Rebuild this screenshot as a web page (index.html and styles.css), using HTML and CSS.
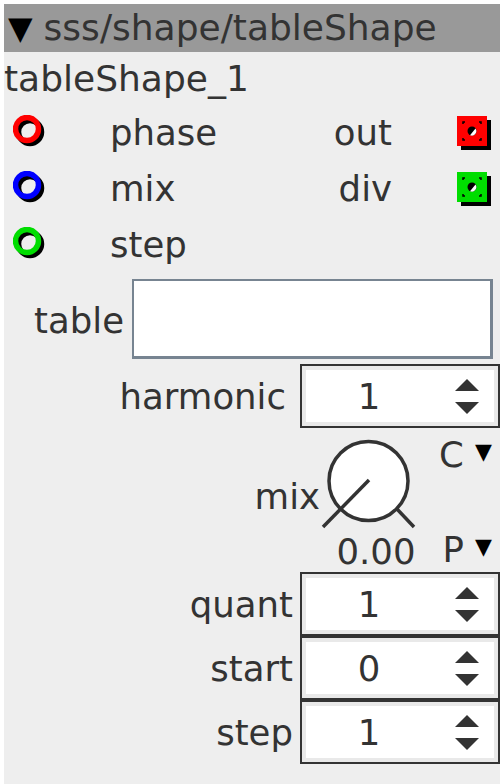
FILE: index.html
```html
<!DOCTYPE html>
<html>
<head>
<meta charset="utf-8">
<link rel="stylesheet" href="styles.css">
</head>
<body>
<div class="panel">
  <div class="header"><span class="tri">▼</span><span class="path">sss/shape/tableShape</span></div>
  <div class="title">tableShape_1</div>

  <div class="io">
    <div class="io-row">
      <svg class="jack-in" width="40" height="40" viewBox="0 0 40 40"><circle cx="17" cy="17" r="11.5" fill="none" stroke="#000" stroke-width="5.5"/><circle cx="14" cy="14" r="11.5" fill="none" stroke="#f00" stroke-width="5.5"/></svg>
      <span class="in-label">phase</span>
      <span class="out-label">out</span>
      <svg class="jack-out" width="40" height="40" viewBox="0 0 40 40"><rect x="5" y="5" width="30" height="30" fill="#000"/><rect x="1" y="1" width="30" height="30" fill="#f00"/><g stroke="#000" stroke-width="1.5" fill="none"><path d="M7 9V7H9M23 7H25V9M25 23V25H23M9 25H7V23"/></g><circle cx="16" cy="16" r="4.5" fill="#000"/><path d="M19.5 13.5A4.5 4.5 0 0 1 14 20.2Z" fill="#fff"/></svg>
    </div>
    <div class="io-row">
      <svg class="jack-in" width="40" height="40" viewBox="0 0 40 40"><circle cx="17" cy="17" r="11.5" fill="none" stroke="#000" stroke-width="5.5"/><circle cx="14" cy="14" r="11.5" fill="none" stroke="#00f" stroke-width="5.5"/></svg>
      <span class="in-label">mix</span>
      <span class="out-label">div</span>
      <svg class="jack-out" width="40" height="40" viewBox="0 0 40 40"><rect x="5" y="5" width="30" height="30" fill="#000"/><rect x="1" y="1" width="30" height="30" fill="#0d0"/><g stroke="#000" stroke-width="1.5" fill="none"><path d="M7 9V7H9M23 7H25V9M25 23V25H23M9 25H7V23"/></g><circle cx="16" cy="16" r="4.5" fill="#000"/><path d="M19.5 13.5A4.5 4.5 0 0 1 14 20.2Z" fill="#fff"/></svg>
    </div>
    <div class="io-row">
      <svg class="jack-in" width="40" height="40" viewBox="0 0 40 40"><circle cx="17" cy="17" r="11.5" fill="none" stroke="#000" stroke-width="5.5"/><circle cx="14" cy="14" r="11.5" fill="none" stroke="#0d0" stroke-width="5.5"/></svg>
      <span class="in-label">step</span>
    </div>
  </div>

  <div class="table-row">
    <span class="label">table</span>
    <div class="text-box"></div>
  </div>

  <div class="param">
    <span class="label">harmonic</span>
    <div class="spin"><span class="val">1</span><span class="arrows"><span class="up"></span><span class="down"></span></span></div>
  </div>

  <div class="knob-row">
    <span class="knob-label">mix</span>
    <div class="knob-col">
      <svg class="knob" width="100" height="100" viewBox="0 0 100 100"><circle cx="48.5" cy="47" r="39.5" fill="#fff" stroke="#333" stroke-width="3.5"/><line x1="49" y1="46" x2="3" y2="93" stroke="#333" stroke-width="3.5"/><line x1="77" y1="75" x2="94" y2="93" stroke="#333" stroke-width="3.5"/></svg>
      <span class="knob-val">0.00</span>
    </div>
    <div class="sel-col">
      <span class="sel">C <span class="dd">▼</span></span>
      <span class="sel">P <span class="dd">▼</span></span>
    </div>
  </div>

  <div class="param short">
    <span class="label">quant</span>
    <div class="spin"><span class="val">1</span><span class="arrows"><span class="up"></span><span class="down"></span></span></div>
  </div>
  <div class="param short">
    <span class="label">start</span>
    <div class="spin"><span class="val">0</span><span class="arrows"><span class="up"></span><span class="down"></span></span></div>
  </div>
  <div class="param short">
    <span class="label">step</span>
    <div class="spin"><span class="val">1</span><span class="arrows"><span class="up"></span><span class="down"></span></span></div>
  </div>
</div>
</body>
</html>
```

FILE: styles.css
```css
html, body {
  margin: 0;
  padding: 0;
  background: #fff;
}
body {
  padding: 4px 4px 0 4px;
  font-family: "DejaVu Sans", sans-serif;
  color: #333;
}
.panel {
  width: 496px;
  height: 780px;
  background: #eee;
  display: flex;
  flex-direction: column;
  font-size: 35.5px;
  overflow: hidden;
}
.header {
  height: 48px;
  background: #999;
  display: flex;
  align-items: center;
  padding-left: 4px;
  gap: 11px;
  flex: none;
  white-space: nowrap;
}
.tri {
  color: #000;
  font-size: 32px;
  line-height: 1;
}
.path {
  color: #333;
  font-size: 36px;
  line-height: 1;
}
.title {
  height: 52px;
  display: flex;
  align-items: center;
  font-size: 36px;
  flex: none;
}
.io {
  display: flex;
  flex-direction: column;
  flex: none;
}
.io-row {
  height: 56px;
  display: flex;
  align-items: center;
  padding-left: 9px;
  white-space: nowrap;
}
.jack-in {
  flex: none;
  margin-top: 6px;
}
.in-label {
  flex: none;
  margin-left: 57px;
  width: 182px;
}
.out-label {
  flex: none;
  width: 100px;
  text-align: right;
}
.jack-out {
  flex: none;
  margin-left: 64px;
  margin-top: 6px;
}
.table-row {
  height: 92px;
  display: flex;
  align-items: center;
  flex: none;
}
.table-row .label {
  width: 120px;
  text-align: right;
  margin-top: 4px;
}
.text-box {
  margin-left: 8px;
  width: 356px;
  height: 75px;
  background: #fff;
  border: 3px solid #778491;
  border-top-width: 2px;
  border-left-width: 2px;
  margin-top: 2px;
}
.param {
  height: 64px;
  display: flex;
  justify-content: flex-end;
  align-items: center;
  flex: none;
}
.param .label {
  margin-right: 14px;
}
.param.short .label {
  margin-right: 7px;
}
.spin {
  width: 196px;
  height: 60px;
  border: 2px solid #333;
  background: #fff;
  box-shadow: inset 0 0 0 4px #e9e9e9;
  display: flex;
  align-items: center;
  box-sizing: content-box;
}
.val {
  width: 134px;
  text-align: center;
}
.arrows {
  display: flex;
  flex-direction: column;
  gap: 11px;
  margin-left: 19px;
}
.up, .down {
  width: 0;
  height: 0;
  border-left: 12px solid transparent;
  border-right: 12px solid transparent;
}
.up {
  border-bottom: 12px solid #333;
}
.down {
  border-top: 12px solid #333;
}
.knob-row {
  height: 144px;
  display: flex;
  justify-content: flex-end;
  flex: none;
}
.knob-label {
  align-self: flex-start;
  margin-top: 48px;
}
.knob-col {
  display: flex;
  flex-direction: column;
  align-items: center;
  width: 100px;
}
.knob {
  margin-top: 6px;
  flex: none;
}
.knob-val {
  margin-left: 12px;
  margin-top: -3px;
  line-height: 1.2;
}
.sel-col {
  width: 80px;
  display: flex;
  flex-direction: column;
  justify-content: space-between;
  align-items: flex-end;
  padding: 6px 8px 2px 0;
  box-sizing: border-box;
}
.sel {
  white-space: nowrap;
}
.sel .dd {
  color: #000;
  font-size: 22px;
  vertical-align: 8px;
}
```
